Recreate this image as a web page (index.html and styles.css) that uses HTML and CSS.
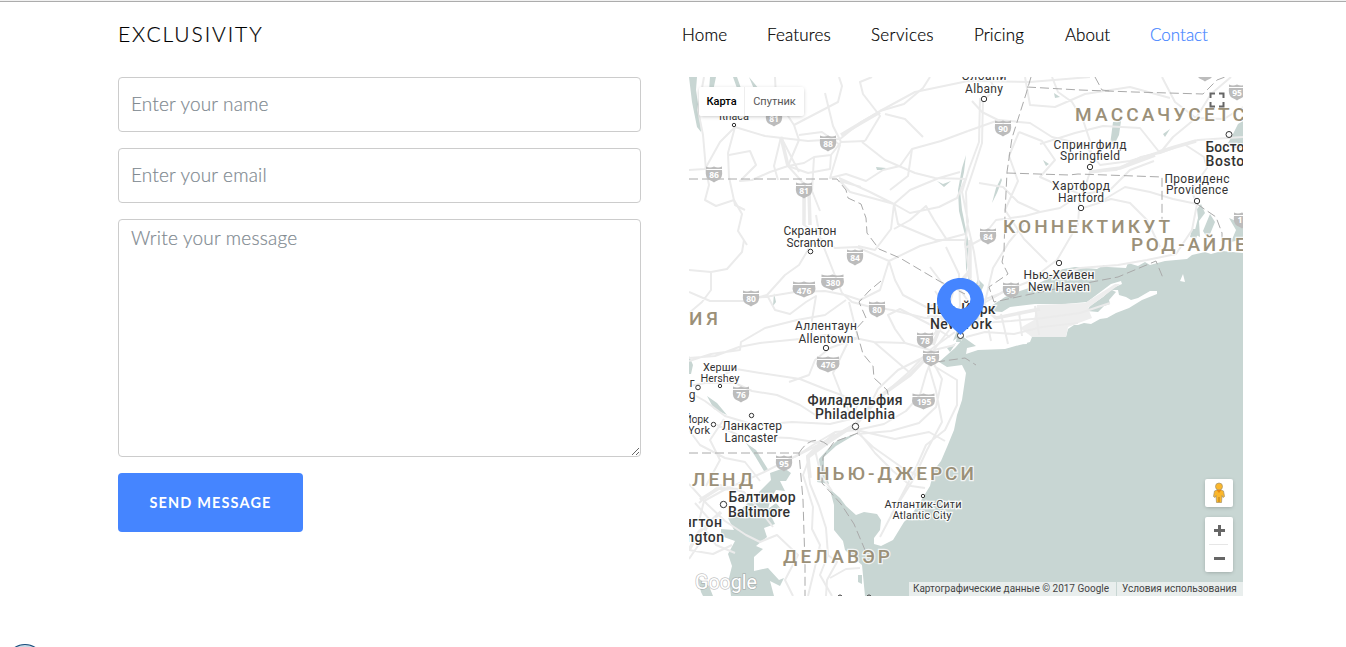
FILE: index.html
```html
<!DOCTYPE html>
<html lang="en">
<head>
<meta charset="utf-8">
<title>Exclusivity – Contact</title>
<link rel="stylesheet" href="styles.css">
</head>
<body>
<header class="header">
  <a class="brand">EXCLUSIVITY</a>
  <nav class="nav"><a class="n1">Home</a><a class="n2">Features</a><a class="n3">Services</a><a class="n4">Pricing</a><a class="n5">About</a><a class="n6 active">Contact</a></nav>
</header>
<main class="content">
  <form class="form">
    <input class="field" type="text" placeholder="Enter your name">
    <input class="field" type="text" placeholder="Enter your email">
    <textarea class="field message" placeholder="Write your message"></textarea>
    <button class="send" type="button">SEND MESSAGE</button>
  </form>
  <section class="map">
    <svg class="map-canvas" viewBox="689 77 554 519" width="554" height="519">
      <defs>
        <path id="shield" d="M-8-7.5Q-4-5.5 0-7.5Q4-5.5 8-7.5V-5H-8ZM-8-4H8Q9 4 4.500 6Q1.500 7 0 8.500Q-1.500 7-4.500 6Q-9 4-8-4Z"/>
        <path id="shield-wide" d="M-11-7.500Q-5-5.500 0-7.500Q5-5.500 11-7.500V-5H-11ZM-11-4H11Q13 4 6 6Q2 7 0 8.500Q-2 7-6 6Q-13 4-11-4Z"/>
      </defs>
      <g class="water">
        <path d="M1243 253L1222 251L1211 254L1205 252L1192 255L1187 259L1165 261L1150 265L1145 262L1138 266L1128 263L1126 268L1108 267L1104 265L1097 269L1075 267L1058 270L1045 280L1032 287L1020 291L1005 297L988 308L979 316L972 319L965 327L962 340L955 348L939 362L947 367L962 365L966 373L962 400L957 415L954 430L947 447L941 461L934 470L930 486L922 499L912 514L904 522L893 540L881 546L874 544L874 538L880 530L881 520L877 514L864 512L856 515L846 506L840 498L832 491L822 483L830 490L834 505L834 530L843 541L845 550L855 559L862 565L865 596H1243Z"/>
        <path d="M689 77H697L696 90L700 118L701 132L697 127L692 102Z"/>
        <path d="M710 77H716L713 91L709 91ZM733 77H737L742 91H738ZM749 77L759 89H754Z"/>
        <path d="M1113 122L1121 121L1119 135L1115 143L1110 145ZM1243 121L1238 124L1231 138L1228 143L1233 148H1243Z"/>
        <path d="M1201 204L1205 213L1199 221L1200 237L1194 234L1198 218L1197 209ZM1210 214L1215 222L1208 239L1203 231ZM1192 229L1199 229L1196 239L1190 237ZM1229 218L1243 224V239L1231 242L1236 230Z"/>
        <path d="M985 77L991 79L984 80ZM1054 93L1060 97L1055 98ZM1163 134L1170 129L1165 137ZM1043 160L1049 164L1046 166Z"/>
        <path d="M966 155L964 172L960 190L962 210L969 245L967 270L973 286L970 287L966 268L965 235L959 211L958 190L962 168ZM1001 178L996 188L992 203L997 193L1002 180Z"/>
        <path d="M978 279L984 285L980 294L976 284ZM962 302L966 322L961 342L956 342L959 324ZM947 348L956 343L950 352ZM959 325L959 336L953 341Z"/>
        <path d="M817 482L820 468L819 459L828 449L838 440L858 433L846 440L836 446L824 457L824 467L829 484Z"/>
        <path d="M770 473L784 468L791 473L786 481L780 481L785 491L776 490L771 498L768 509L776 503L783 511L771 516L775 524L764 528L767 537L756 546L763 549L754 557L754 571L768 568L779 580L784 578L780 586L770 581L774 596H731L729 578L732 566L728 554L735 541L721 536L721 529L734 530L728 518L739 511L748 503L760 502L759 492L771 480ZM746 443L756 450L769 471L764 471L755 456Z"/>
        <path d="M689 356L693 365L691 374H689ZM707 396L717 403L727 415L714 409ZM774 293L776 302L773 306ZM876 167L886 168L884 170L877 170ZM937 181L943 184L951 181L944 187ZM701 592L698 578L709 586L713 596H703ZM858 575L862 575L862 584L858 582Z"/>
        <path d="M971 347Q976 338 981 346L978 350ZM1007 347L1028 341V338L1009 343Z"/>
      </g>
      <path class="land" d="M980 318L989 311L1002 312L1010 307L1035 304L1065 304L1087 302L1103 290L1111 284L1121 281L1122 284L1113 288L1103 297L1090 306L1087 311L1098 312L1104 306L1110 304L1109 300L1116 292L1112 290L1118 290L1119 295L1126 297L1131 300L1138 298L1150 291L1157 291L1157 294L1142 300L1129 308L1116 313L1107 318L1100 319L1091 324L1084 323L1078 325L1074 325L1068 329L1066 337H1032L1030 342L1005 349L978 350L966 354L967 348L976 346L962 336L967 325Z"/>
      <path class="urban" d="M1037 305L1085 303L1115 284L1120 284L1088 308L1092 318L1068 327L1066 337L1032 337L1020 328L1034 320Z"/>
      <path class="land" d="M1180 281L1183 274L1185 282ZM988 303L1004 296L1001 300ZM1009 345L1026 339L1027 344Z"/>
      <g class="roads">
        <path d="M689 170L705 169L720 142L735 127L765 136L808 141L840 139L861 122L880 111L915 92L968 81L1030 82L1090 77"/>
        <path d="M704 77L698 110L703 135L706 170L709 185L705 200L716 206L734 200L742 214L738 231L747 245"/>
        <path d="M735 127L728 153L729 177L735 205L745 210M729 155L750 151L756 165L740 181L752 180L770 172L788 166L804 163L814 157L831 155L841 142L865 141M781 137L774 166L778 180M781 137L799 172M775 77L776 98L794 125L799 140L788 166L805 185L804 225L812 230M794 125L838 102L842 86L839 77M799 135L822 132L840 145L830 178L846 174L866 181L883 170L900 166L912 149L941 141L968 131"/>
        <path d="M865 141L880 116L863 94L860 82L872 77M825 93L833 126L841 142M880 111L904 104L923 88L930 77M862 142L885 160L915 173L935 178L967 179M923 137L905 119L885 114M912 149L908 176L890 190M831 155L830 169L808 173L788 166M814 157L812 191L820 211M839 178L870 192L894 204L910 213L939 207L957 198L965 180M861 187L840 181L850 192L894 204L891 229L875 250L858 246M894 204L910 190L939 178L960 172M894 204L898 224L936 240L965 240M894 229L910 220L926 206L934 220L947 240"/>
        <path d="M980 98L979 142L969 169L962 192L968 221L965 244L970 278L978 294M983 98L982 143L974 168L966 192L967 222L974 252L979 285"/>
        <path d="M968 131L999 120L1030 123L1052 137L1085 145L1100 165L1130 161L1162 151L1198 140L1243 137M1004 123L982 112L972 101M989 77L995 90L981 102M1019 132L1042 141L1055 160L1040 177L1058 185L1080 194L1078 224L1057 260L1028 282L1007 290L984 303"/>
        <path d="M1052 77L1058 92L1072 102L1083 120L1091 144L1090 172L1083 193L1060 208L1040 212L1025 216L996 220L980 240L965 248M1090 172L1116 170L1141 157L1160 153L1173 137L1196 118L1211 94L1231 77M1160 153L1184 144L1204 157L1207 168L1191 190L1197 204L1192 230L1176 254L1147 260L1118 265L1080 268L1050 277M1196 118L1175 102L1162 77M1196 118L1224 119L1243 107M1080 209L1111 199L1130 203L1147 220L1160 247M1100 202L1125 187L1150 192L1173 199L1197 204M1040 212L1018 202L1003 187L979 183M1019 132L1009 156L1018 181L1005 210L1024 239L1047 262M1083 194L1110 190L1130 170L1154 161M1040 144L1075 133L1103 126L1140 128L1160 153M1025 77L1030 105L1055 107L1085 94L1130 87L1170 98"/>
        <path d="M689 270L711 272L711 290L702 302L689 313M711 272L727 269L742 252L744 240M689 292L710 301L745 301L767 295L785 275L799 265L811 245L821 240L832 268L842 293L852 302L867 306L892 310L925 318L955 317M752 298L765 297L795 292L825 291L845 295L860 300L880 290L889 261L920 246L965 234M889 261L857 247L835 248L820 238L816 215M889 261L895 280L903 295L926 307L943 302L935 291M767 295L775 310L790 314L806 302L816 296L812 320L812 340"/>
        <path d="M689 358L715 356L739 347L760 343L800 339L825 335L850 337L874 342L905 343L930 350L955 332M689 386L705 383L736 369L760 373L800 379L825 389L844 396L858 404L851 419L830 424L792 422L755 425L725 416L705 401L689 392M705 383L735 383L752 391L777 395L800 405L820 418M689 361L711 354L740 350L741 342L765 328L797 320L825 315L846 300M849 302L858 338L830 348L815 360L809 375L789 382M850 338L833 373L842 396L852 418M874 342L909 372L922 358L934 350L955 345M909 372L884 394L870 405L856 423L820 444L790 459L762 473L724 490L704 501L699 521L716 545L735 553"/>
        <path d="M905 343L895 329L888 315L900 309L929 324L950 337M935 350L920 359L898 370L878 389L867 411L853 427M935 350L926 374L920 395L906 411L884 424L857 430L835 432L813 445L795 457M933 362L942 379L936 407L919 423L891 431L857 434M934 366L957 380L957 405L945 430L926 445L915 470L903 493L880 537M929 367L936 391L942 422L927 450L913 480L891 515M857 430L875 453L893 471L911 486L925 488M820 443L807 456L810 484L819 506L826 528L828 555L820 575L832 596M809 459L803 475L813 507L812 529L820 545L815 567L808 596M835 433L815 450L821 475L832 491M857 432L873 447L904 469L928 480M856 430L895 439L929 432L945 441"/>
        <path d="M689 484L707 504L725 521L746 535L760 542L777 535L798 555L785 580L793 596M695 503L710 520L702 540L689 559M699 503L720 485L744 492L759 509L773 527M717 425L740 436L765 437L790 438L820 443M724 419L710 440L720 460L706 486M689 430L700 445L725 458L745 462L760 481M689 550L713 554L732 545M820 549L837 562L827 580L826 596M830 578L846 569L860 568"/>
        <path d="M929 307L938 317L936 332L924 344M946 247L959 274L960 306L950 329L929 356M930 267L942 283L961 291L973 308L971 330M978 302L999 294L1012 286M985 302L993 268L1009 242L1024 224M962 327L982 323L1011 321L1043 318L1080 313L1110 303M966 337L985 332L1014 334L1042 327L1078 323M986 317L991 341M1001 314L1008 344M1019 312L1022 336M1035 306L1039 335"/>
      </g>
      <g class="roads major">
        <path d="M856 424L830 441L808 457L810 478M856 424L879 397L910 375L930 354M1196 141L1175 147L1159 152M781 137L788 166M689 550L699 532L721 512"/>
        <path d="M970 271L953 290L947 310L933 345M976 285L985 307L977 325M981 305L996 318L1040 309M700 500L719 488L742 490M927 317L957 318M970 240L970 278M804 192V225M809 192L810 225M880 112L861 123L841 135M1090 172L1120 168L1155 155"/>
      </g>
      <g class="borders">
        <path class="dash" d="M689 179H837L846 190L848 198L861 204L866 218L867 233L879 249L900 258L939 281L965 294"/>
        <path class="dash" d="M1031 77L1026 94L1012 138L1007 172L1005 214L1004 252L1002 262L1008 274L989 287L994 302L1050 290L1118 277L1156 261L1163 278"/>
        <path class="dash" d="M1027 87L1080 90L1134 92L1203 94L1217 80L1225 77M1007 173L1069 175L1078 174L1162 177V222M1095 77L1102 90L1110 91M1197 204L1216 217L1222 233L1222 242"/>
        <path class="dash" d="M881 281L869 291L859 302L866 318L856 329L863 354L873 366L874 378L887 390L890 402M858 433L834 442L823 457L822 483L841 504L854 524L865 550M689 453H799L803 500L805 565L805 596M799 453Q813 431 830 447M936 362L965 358L976 365"/>
      </g>
      <g class="shields">
        <use href="#shield" x="714" y="174"/><use href="#shield" x="774" y="118"/><use href="#shield" x="828" y="143"/><use href="#shield" x="804" y="190"/>
        <use href="#shield" x="855" y="257"/><use href="#shield" x="751" y="298"/><use href="#shield-wide" x="804" y="289"/><use href="#shield-wide" x="832.500" y="282"/>
        <use href="#shield" x="877" y="309"/><use href="#shield" x="925" y="340"/><use href="#shield" x="931" y="358"/><use href="#shield-wide" x="828" y="364"/>
        <use href="#shield-wide" x="923.500" y="401"/><use href="#shield" x="741" y="394"/><use href="#shield" x="784" y="463"/><use href="#shield" x="1003" y="128"/>
        <use href="#shield" x="988" y="236"/><use href="#shield" x="1011" y="290"/><use href="#shield" x="1237" y="92"/><use href="#shield" x="1205" y="73"/><use href="#shield" x="1242" y="220"/>
      </g>
      <g class="route">
        <text x="714" y="178">86</text><text x="774" y="122">81</text><text x="828" y="147">88</text><text x="804" y="194">81</text><text x="855" y="261">84</text>
        <text x="751" y="302">80</text><text x="804" y="294">476</text><text x="833" y="286">380</text><text x="877" y="313">80</text><text x="925" y="344">78</text>
        <text x="931" y="362">95</text><text x="828" y="368">476</text><text x="924" y="405">195</text><text x="741" y="398">76</text><text x="784" y="467">95</text>
        <text x="1003" y="132">90</text><text x="988" y="240">84</text><text x="1011" y="294">95</text><text x="1237" y="96">95</text><text x="1240" y="223">1</text>
      </g>
      <g class="states">
        <text x="1075" y="121" textLength="170">МАССАЧУСЕТС</text>
        <text x="1003" y="233" textLength="167">КОННЕКТИКУТ</text>
        <text x="1131" y="251" textLength="131">РОД-АЙЛЕН</text>
        <text x="689" y="325" textLength="29">ИЯ</text>
        <text x="816" y="480" textLength="158">НЬЮ-ДЖЕРСИ</text>
        <text x="692" y="486" textLength="61">ЛЕНД</text>
        <text x="783" y="563" textLength="107">ДЕЛАВЭР</text>
      </g>
      <g class="cities">
        <text x="984" y="80" textLength="45">Олбани</text><text x="984" y="93" textLength="38">Albany</text>
        <text x="1090" y="149" textLength="73">Спрингфилд</text><text x="1090" y="160" textLength="60">Springfield</text>
        <text x="1081" y="190" textLength="58">Хартфорд</text><text x="1081" y="202" textLength="46">Hartford</text>
        <text x="1197" y="183" textLength="65">Провиденс</text><text x="1197" y="194" textLength="62">Providence</text>
        <text x="810" y="235" textLength="53">Скрантон</text><text x="810" y="247" textLength="47">Scranton</text>
        <text x="1059" y="279" textLength="71">Нью-Хейвен</text><text x="1059" y="291" textLength="62">New Haven</text>
        <text x="826" y="330" textLength="62">Аллентаун</text><text x="826" y="343" textLength="55">Allentown</text>
        <text x="752" y="430" textLength="60">Ланкастер</text><text x="751" y="442" textLength="53">Lancaster</text>
        <text x="692" y="387">г</text><text x="692" y="399">g</text>
      </g>
      <g class="cities small">
        <text x="734" y="120" textLength="30">Ithaca</text><text x="720" y="371" textLength="34">Херши</text><text x="720" y="382" textLength="39">Hershey</text>
        <text x="696.500" y="423" textLength="25">Йорк</text><text x="699" y="434" textLength="22">York</text>
        <text x="923" y="508" textLength="77">Атлантик-Сити</text><text x="922" y="519" textLength="59">Atlantic City</text>
      </g>
      <g class="cities large">
        <text x="961" y="314" textLength="69">Нью-Йорк</text><text x="961" y="329" textLength="62">New York</text>
        <text x="855" y="405" textLength="95">Филадельфия</text><text x="855" y="419" textLength="80">Philadelphia</text>
        <text x="762" y="502" textLength="67">Балтимор</text><text x="759" y="517" textLength="62">Baltimore</text>
        <text x="684" y="527" textLength="76">Вашингтон</text><text x="685" y="542" textLength="78">Washington</text>
        <text x="1229" y="152" textLength="47">Бостон</text><text x="1229" y="166" textLength="47">Boston</text>
      </g>
      <g class="dots">
        <circle cx="984" cy="99" r="2.700"/><circle cx="1090" cy="167" r="2.700"/><circle cx="1081" cy="208" r="2.700"/><circle cx="1197" cy="201" r="2.700"/><circle cx="1229" cy="134.500" r="3"/>
        <circle cx="810.500" cy="251.500" r="2.300"/><circle cx="826" cy="348" r="2.700"/><circle cx="1059" cy="263" r="2.700"/><circle cx="698" cy="387.500" r="2.300"/><circle cx="720" cy="386" r="1.700"/>
        <circle cx="751.500" cy="415.500" r="2.200"/><circle cx="713.500" cy="424.500" r="2.200"/><circle cx="855.500" cy="426.500" r="3.200"/><circle cx="723.500" cy="504.500" r="3.200"/><circle cx="734" cy="125" r="1.700"/>
        <circle cx="923" cy="496" r="1.700"/><circle cx="960.500" cy="335.500" r="3"/><circle cx="840" cy="597" r="2"/><circle cx="869" cy="597" r="2"/>
      </g>
      <path class="pin" fill-rule="evenodd" d="M960.500 278C947 278 937 288 937 301C937 315 951 326 960.500 335C970 326 984 315 984 301C984 288 974 278 960.500 278ZM960.500 289A10 10 0 1 1 960.500 309A10 10 0 1 1 960.500 289Z"/>
      <text class="google" x="695" y="589" textLength="62" lengthAdjust="spacingAndGlyphs">Google</text>
    </svg>
    <div class="map-type"><span class="chosen">Карта</span><span class="satellite">Спутник</span></div>
    <svg class="fullscreen" width="16" height="16" viewBox="0 0 16 16"><path d="M1.500 6V1.500H6M10 1.500H14.500V6M14.500 10V14.500H10M6 14.500H1.500V10"/></svg>
    <div class="controls">
      <div class="pegman"><svg width="14" height="22" viewBox="0 0 14 22"><path d="M5 8L2.500 9L1.500 14.500L3 15.500L4 13.500L4.500 20.500H9.500L10 13.500L11 15.500L12.500 14.500L11.500 9L9 8Z" fill="#fbb72b" stroke="#a39168" stroke-width=".7"/><circle cx="7" cy="4.500" r="3.500" fill="#fbb72b" stroke="#a39168" stroke-width=".7"/><path d="M4.500 8H9.500L7 11Z" fill="#e98a10"/><path d="M7 15V20" stroke="#b57b16"/></svg></div>
      <div class="zoom"><svg width="28" height="55" viewBox="0 0 28 55"><path d="M9 13.500H20M14.500 8V19M9 41.500H20" stroke="#666" stroke-width="3"/><path d="M4 27.500H23" stroke="#e6e6e6"/></svg></div>
    </div>
    <div class="legal"><span class="data">Картографические данные © 2017 Google</span><span class="terms">Условия использования</span></div>
  </section>
</main>
<svg class="corner-badge" width="40" height="4" viewBox="0 0 40 4"><circle cx="20" cy="20" r="18.500" fill="#c9d9e6" stroke="#174d7c" stroke-width="1.200"/></svg>
</body>
</html>
```
FILE: styles.css
```css
*{box-sizing:border-box}
body{margin:0;height:647px;overflow:hidden;position:relative;background:#fff;font-family:Lato,"Liberation Sans",sans-serif;font-weight:300}
.header{height:77px;border-top:1px solid #f1f1f1;box-shadow:inset 0 1px #acacac;padding:0 138px 9px 118px;display:flex;align-items:center;justify-content:space-between}
.brand{font-size:21px;letter-spacing:1.900px;color:#000;padding-bottom:2px;-webkit-text-stroke:.2px}
.nav{display:flex;gap:40px;font-size:17px;color:#000;-webkit-text-stroke:.2px;padding-bottom:1px;white-space:nowrap}
.n1{width:45px;letter-spacing:.2px}
.n2{width:64px;letter-spacing:.15px}
.n3{width:63px;letter-spacing:.35px}
.n4{width:51px;letter-spacing:.1px}
.n5{width:45px}
.n6{width:58px}
.active{color:#4585ff}
.content{display:flex;align-items:flex-start;gap:48px;padding-left:118px}
.form{width:523px;display:flex;flex-direction:column;gap:16px;align-items:flex-start}
.field{display:block;width:100%;height:55px;border:1px solid #ccc;border-radius:4px;padding:0 12px 2px;font:300 19px Lato,"Liberation Sans",sans-serif;letter-spacing:.17px;background:#fff;outline:0}
.field::placeholder{color:#818a91;opacity:1;-webkit-text-stroke:.2px}
.message{height:238px;padding-top:6px;letter-spacing:.22px}
.send{width:185px;height:59px;border:0;border-radius:4px;background:#4585ff;color:#fff;font:700 14.5px Lato,"Liberation Sans",sans-serif;letter-spacing:1.150px;padding:0 0 1px}
.map{position:relative;width:554px;height:519px;overflow:hidden;font-family:Roboto,"Noto Sans",sans-serif;font-weight:400}
.map-canvas{display:block;background:#fff}
.water{fill:#c8d6d3}
.land{fill:#fff}
.urban{fill:#eee}
.roads{fill:none;stroke:#ebebeb;stroke-width:2;stroke-linejoin:round}
.major{stroke-width:3.500}
.borders{fill:none;stroke:#aaa;stroke-width:1}
.dash{stroke-dasharray:9 4}
.shields{fill:#bcbcbc}
.route{fill:#fff;font:700 8.5px "Open Sans",sans-serif;text-anchor:middle}
.states{fill:#9b9078;font-size:19px;font-weight:500;stroke:#fff;stroke-opacity:.75;stroke-width:2.500px;paint-order:stroke}
.cities{fill:#333;font-size:12px;text-anchor:middle;stroke:#fff;stroke-opacity:.85;stroke-width:2.500px;paint-order:stroke}
.small{font-size:11px}
.large{font-size:14px;font-weight:500}
.dots{fill:#fff;stroke:#333;stroke-width:1}
.pin{fill:#4585ff}
.google{font:400 20px Roboto,sans-serif;fill:#fff;stroke:#999;stroke-opacity:.6;stroke-width:1.500px;paint-order:stroke}
.map-type{position:absolute;left:10px;top:10px;height:29px;display:flex;background:#fff;border-radius:2px;box-shadow:0 1px 4px -1px rgba(0,0,0,.3);font-size:11px;line-height:29px}
.chosen{width:46px;text-align:center;font-weight:500;color:#000;border-right:1px solid #eee}
.satellite{width:59px;text-align:center;color:#565656}
.fullscreen{position:absolute;right:18px;top:15px;background:#fff;fill:none;stroke:#666;stroke-width:2}
.controls{position:absolute;right:10px;top:402px;display:flex;flex-direction:column;gap:10px}
.pegman,.zoom{width:28px;background:#fff;border-radius:2px;box-shadow:0 1px 4px -1px rgba(0,0,0,.3)}
.pegman{height:28px;display:flex;align-items:center;justify-content:center}
.zoom{height:55px}
.zoom svg{display:block}
.legal{position:absolute;right:0;bottom:0;height:14px;display:flex;gap:1px;font-size:10px;line-height:14px;color:#444;white-space:nowrap}
.data{width:207px;background:#e9eeed;padding-left:4px}
.terms{width:126px;background:#e9eeed;padding-left:5px}
.corner-badge{position:absolute;left:5px;top:643px}
```
